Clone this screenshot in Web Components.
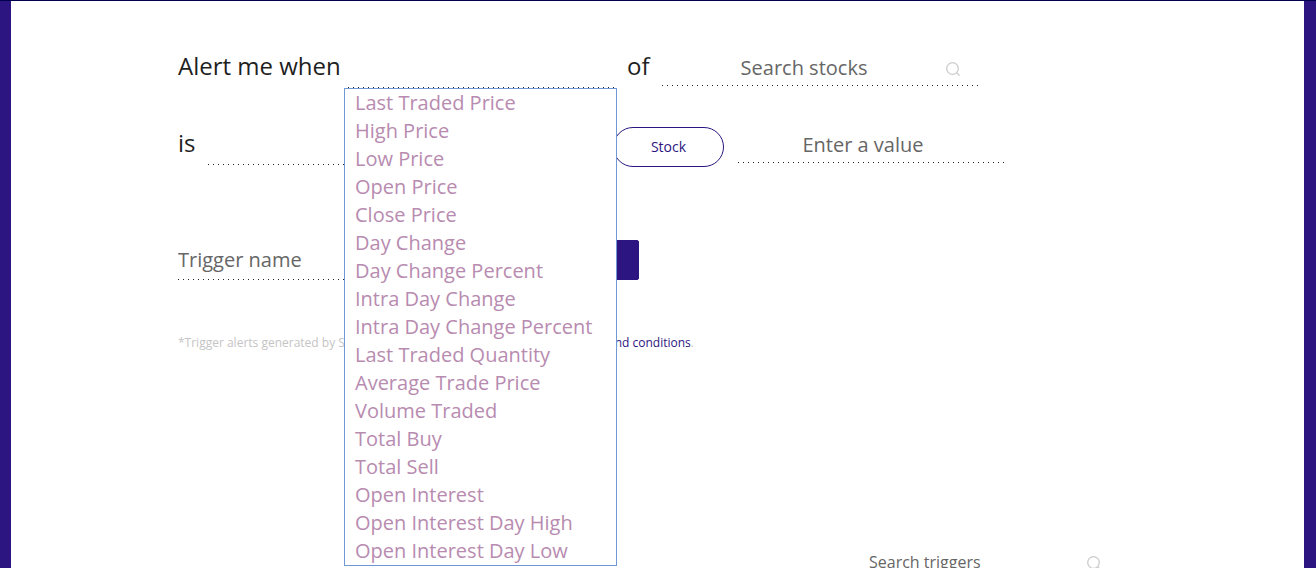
<!DOCTYPE html>
<html lang="en">
<head>
<meta charset="utf-8">
<title>Create trigger</title>
<style>
  body { margin: 0; background: #fff; font-family: "Open Sans", sans-serif; color: #1f1f1f; }
</style>
</head>
<body>
<trigger-page></trigger-page>
<script>
const dots = 'repeating-linear-gradient(90deg, #222 0 1px, transparent 1px 5px)';

class SearchIcon extends HTMLElement {
  constructor() {
    super();
    this.attachShadow({ mode: 'open' }).innerHTML = `
      <style>
        :host { display: block; width: 14px; height: 14px; color: #ccc; }
        svg { display: block; }
      </style>
      <svg width="14" height="14" viewBox="0 0 14 14" fill="none" stroke="currentColor" stroke-width="1.3" aria-hidden="true">
        <circle cx="6.5" cy="6.5" r="5.8"/><path d="M10.7 10.7L13.6 13.6"/>
      </svg>`;
  }
}
customElements.define('search-icon', SearchIcon);

class DottedInput extends HTMLElement {
  constructor() {
    super();
    const label = this.getAttribute('label');
    this.attachShadow({ mode: 'open' }).innerHTML = `
      <style>
        :host { display: flex; align-items: baseline; position: relative; background: ${dots} left bottom / 100% 1px no-repeat; }
        input {
          box-sizing: content-box; width: 100%; min-width: 0; height: 28px; margin: 0; border: 0; outline: 0;
          padding: 0 0 var(--pad-bottom, 4px); background: none; text-align: var(--align, left);
          padding-right: var(--pad-right, 0);
          font: 20px/28px "Open Sans", sans-serif; font-size: var(--size, 20px); color: #222;
        }
        input::placeholder { color: #666; opacity: 1; }
        ::slotted(search-icon) { position: absolute; right: var(--icon-right, 20px); bottom: 10px; }
      </style>
      <input type="text" aria-label="${label}" placeholder="${label}"><slot></slot>`;
  }
}
customElements.define('dotted-input', DottedInput);

class DottedSelect extends HTMLElement {
  constructor() {
    super();
    const label = this.getAttribute('label');
    const items = this.getAttribute('options');
    const menu = items ? `<select class="menu" size="${items.split('|').length}" aria-label="${label} options">${
      items.split('|').map(t => `<option>${t}</option>`).join('')}</select>` : '';
    this.attachShadow({ mode: 'open' }).innerHTML = `
      <style>
        :host { display: flex; align-items: baseline; position: relative; }
        .field {
          appearance: none; box-sizing: border-box; width: 100%; height: 34px; margin: 0; border: 0; border-radius: 0; outline: 0;
          padding: 0 0 6px; font: 20px/28px "Open Sans", sans-serif;
          background: ${dots} var(--dot-start, 0) bottom / 100% 1px no-repeat;
        }
        .menu {
          position: absolute; z-index: 2; top: 100%; left: 0; box-sizing: border-box; width: 100%; margin: 0; padding: 0;
          border: 1px solid #7098d4; border-radius: 0; outline: 0; background: #fff; overflow: hidden;
          font: 20px "Open Sans", sans-serif; color: #b88bb0; height: auto; scrollbar-width: none;
        }
        .menu option { box-sizing: border-box; height: 28px; min-height: 28px; padding: 0 10px; line-height: 28px; color: #b88bb0; }
      </style>
      <select class="field" aria-label="${label}"><option></option></select>${menu}`;
  }
}
customElements.define('dotted-select', DottedSelect);

class ActionButton extends HTMLElement {
  constructor() {
    super();
    this.attachShadow({ mode: 'open' }).innerHTML = `
      <style>
        :host { display: block; }
        button {
          display: block; box-sizing: border-box; width: 100%; height: 40px; padding: 0; border: 1px solid #2c1580; border-radius: 20px;
          background: #fff; color: #2c1580; font: 14px "Open Sans", sans-serif;
        }
        :host([solid]) button { border-radius: 2px; background: #2c1580; color: #fff; }
      </style>
      <button type="button"><slot></slot></button>`;
  }
}
customElements.define('action-button', ActionButton);

class TriggerPage extends HTMLElement {
  constructor() {
    super();
    this.attachShadow({ mode: 'open' }).innerHTML = `
      <style>
        :host {
          display: block; box-sizing: border-box; height: 100vh; overflow: hidden; border-top: 1px solid #00004d;
          background: linear-gradient(#2c1580, #2c1580) left / 11px 100% no-repeat, linear-gradient(#2c1580, #2c1580) right / 12px 100% no-repeat;
        }
        main { padding: 48px 178px 0; }
        .row { display: grid; align-items: baseline; font-size: 24px; line-height: 33px; white-space: nowrap; }
        .metric { grid-template-columns: 166px 273px 45px 318px; }
        .metric span + dotted-select + span { padding-left: 10px; }
        .metric dotted-select { --dot-start: 4px; }
        .condition { grid-template-columns: 16px 391px 111px 268px; gap: 14px; margin-top: 38px; }
        .name { grid-template-columns: 270px 150px; gap: 41px; margin-top: 73px; align-items: end; --pad-bottom: 6px; }
        .search { --align: center; --pad-right: 34px; }
        .value { --align: center; --pad-right: 18px; }
        .note { display: flex; justify-content: space-between; width: 516px; margin: 53px 0 0; font-size: 12px; line-height: 20px; color: #c4c4c4; }
        a { color: #2c1580; text-decoration: none; }
        .filter { display: flex; align-items: center; justify-content: flex-end; margin: 195px 37px 0 0; }
        .filter dotted-input { width: 232px; --size: 16px; --icon-right: 0; }
      </style>
      <main>
        <div class="row metric">
          <span>Alert me when</span>
          <dotted-select label="Price metric" options="Last Traded Price|High Price|Low Price|Open Price|Close Price|Day Change|Day Change Percent|Intra Day Change|Intra Day Change Percent|Last Traded Quantity|Average Trade Price|Volume Traded|Total Buy|Total Sell|Open Interest|Open Interest Day High|Open Interest Day Low"></dotted-select>
          <span>of</span>
          <dotted-input class="search" label="Search stocks"><search-icon></search-icon></dotted-input>
        </div>
        <div class="row condition">
          <span>is</span>
          <dotted-select label="Condition"></dotted-select>
          <action-button>Stock</action-button>
          <dotted-input class="value" label="Enter a value"></dotted-input>
        </div>
        <div class="row name">
          <dotted-input label="Trigger name"></dotted-input>
          <action-button solid>Create</action-button>
        </div>
        <p class="note"><span>*Trigger alerts generated by Sentinel</span><span><a href="#terms">terms and conditions</a>.</span></p>
        <div class="filter"><dotted-input label="Search triggers"><search-icon></search-icon></dotted-input></div>
      </main>`;
  }
}
customElements.define('trigger-page', TriggerPage);
</script>
</body>
</html>
